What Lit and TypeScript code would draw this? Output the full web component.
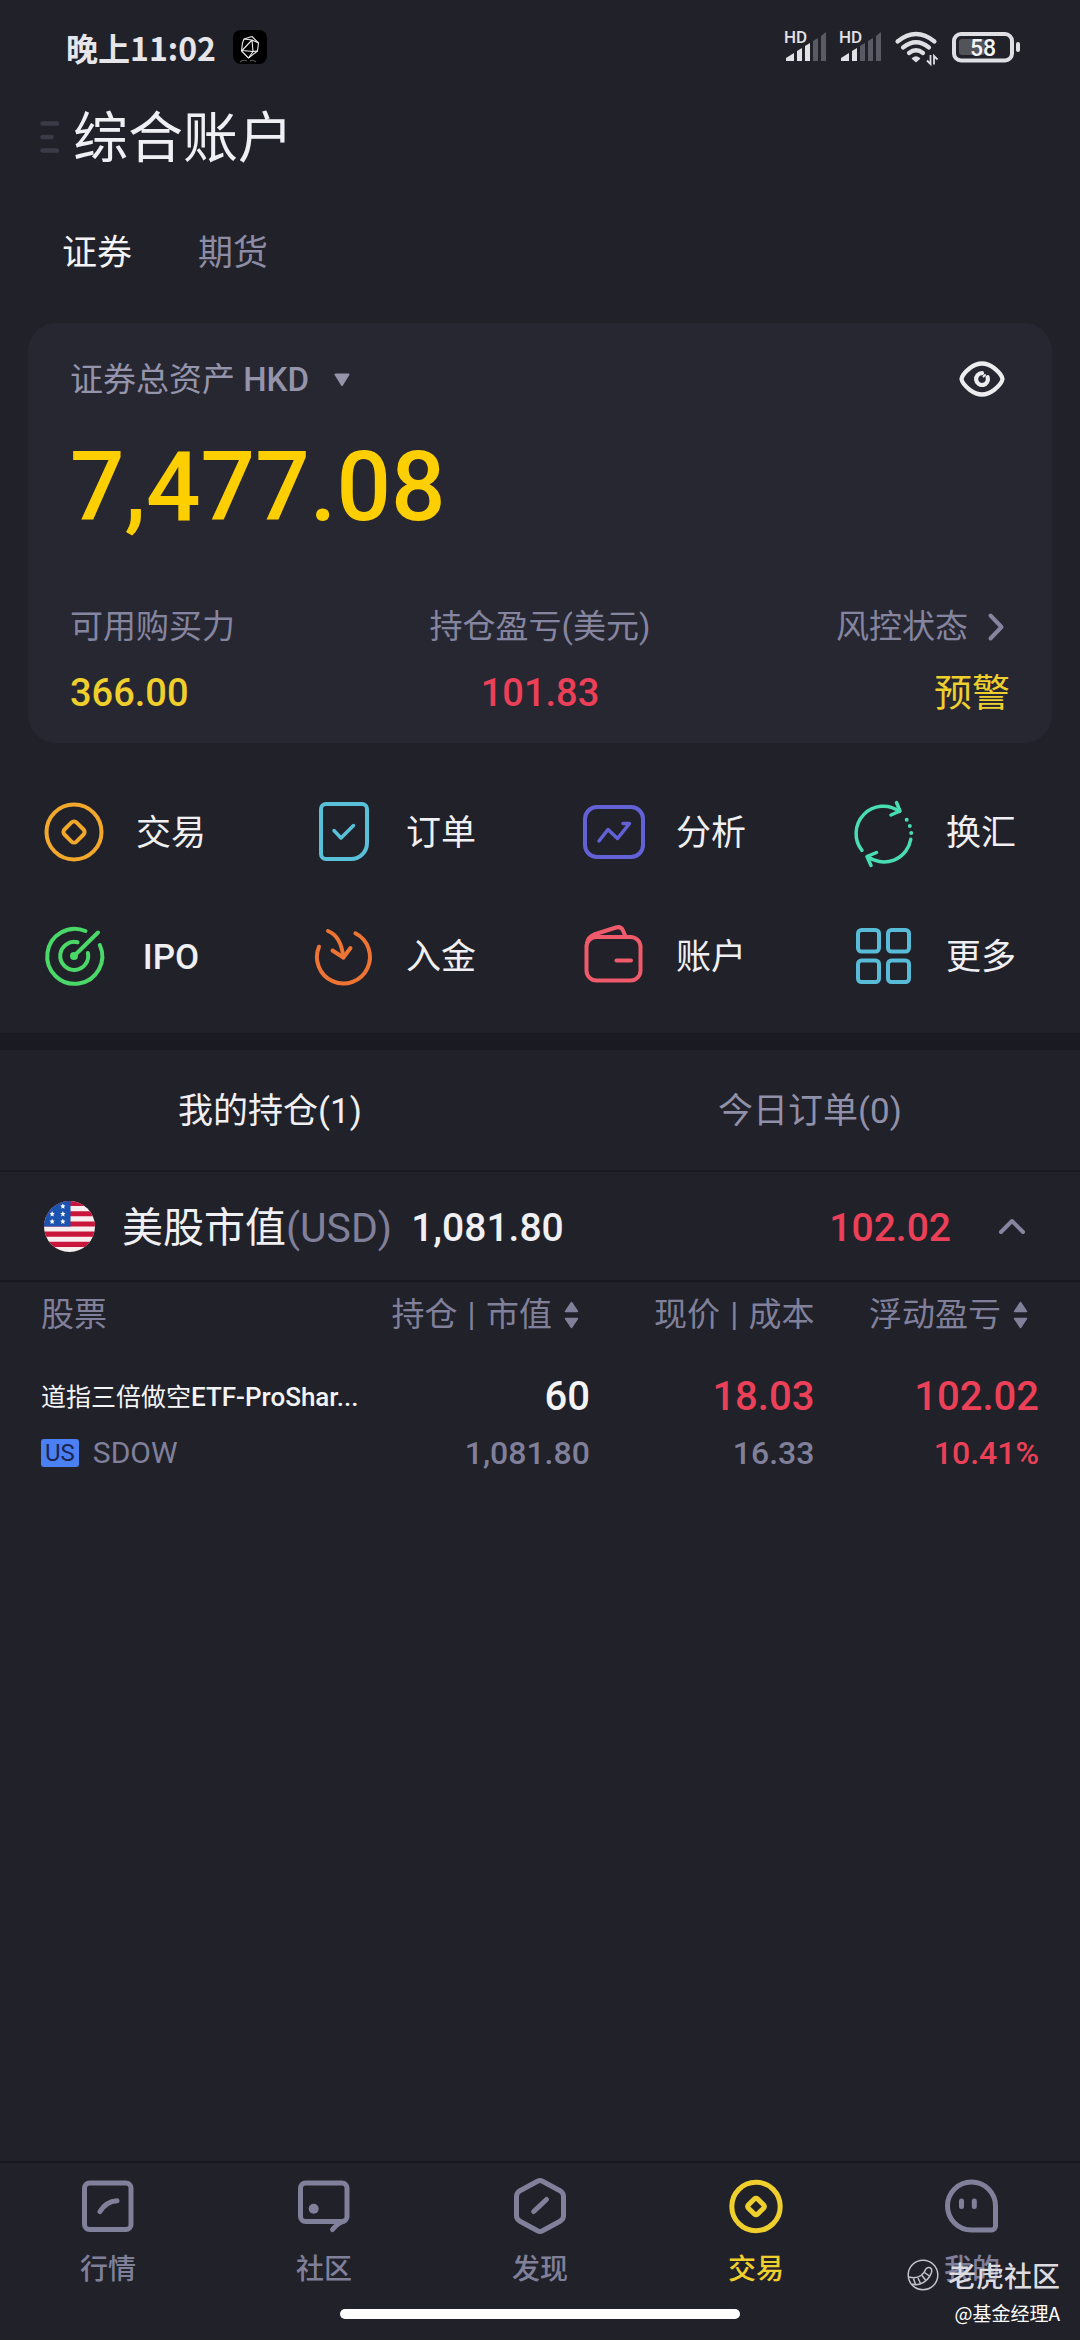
import { LitElement, html, css, svg } from "lit";
import { customElement, property, state } from "lit/decorators.js";
import { classMap } from "lit/directives/class-map.js";

const fontStack = css`Roboto, "Noto Sans CJK SC", sans-serif`;

const reset = css`
  * {
    box-sizing: border-box;
  }
  button {
    appearance: none;
    border: 0;
    margin: 0;
    padding: 0;
    background: none;
    color: inherit;
    font: inherit;
    cursor: pointer;
  }
  a {
    color: inherit;
    text-decoration: none;
  }
  svg {
    display: block;
    flex: none;
    overflow: visible;
  }
`;

const coin = svg`<circle cx="32" cy="32" r="27.5"/><rect x="23.5" y="23.5" width="17" height="17" rx="3.5" transform="rotate(45 32 32)"/>`;

const actions = [
  { label: "交易", color: "#f2a92b", icon: coin },
  {
    label: "订单",
    color: "#58c0d8",
    icon: svg`<path d="M14 4H50a5 5 0 0 1 5 5V43a16 16 0 0 1-16 16H14a5 5 0 0 1-5-5V9a5 5 0 0 1 5-5z"/><path d="M22 30.5L29 38L41.5 25.5" stroke-width="3.5"/>`,
  },
  {
    label: "分析",
    color: "#6262d6",
    icon: svg`<rect x="3" y="7" width="58" height="50" rx="12"/><path d="M17 41L26 29.5L35.5 38.5L47.5 23.5H41" stroke-width="3.5"/>`,
  },
  {
    label: "换汇",
    color: "#48deb2",
    icon: svg`<g stroke-width="3.5"><path d="M10 50.5A27.3 27.3 0 0 1 47.5 11.5"/><path d="M44.5 2.5L48 11L39 15"/><path d="M58.8 39.3A27.3 27.3 0 0 1 15.5 56.5"/><path d="M24.5 52.5L15 56.5L19 65.5"/></g><path d="M54.7 19.7h0M57.8 26h0M59.2 33h0"/>`,
  },
  {
    label: "IPO",
    color: "#4ad868",
    icon: svg`<path d="M43.5 7A27.5 27.5 0 1 0 57.8 21"/><path d="M35.5 18.3A14 14 0 1 0 45.9 29"/><path d="M32 32L56 8.5"/><circle cx="32" cy="32" r="2"/>`,
  },
  {
    label: "入金",
    color: "#ee7433",
    icon: svg`<path d="M43.4 9.3A26.5 26.5 0 1 1 7 22.7"/><path d="M16 7Q29 12 31.4 33.5"/><path d="M20.5 26.5L31.4 33.5L38.5 24"/>`,
  },
  {
    label: "账户",
    color: "#f05b6c",
    icon: svg`<rect x="4.5" y="13" width="54" height="43.5" rx="10"/><path d="M5 19Q6 13 12 10.5L34 3.5Q39 2 41 6.5L43.5 12.5"/><path d="M34.5 36.5H49"/>`,
  },
  {
    label: "更多",
    color: "#58bcd8",
    icon: svg`<g stroke-width="4"><rect x="6" y="6" width="21" height="21.5" rx="3.5"/><rect x="36" y="6" width="21" height="21.5" rx="3.5"/><rect x="6" y="36.5" width="21" height="21.5" rx="3.5"/><rect x="36" y="36.5" width="21" height="21.5" rx="3.5"/></g>`,
  },
];

const navItems = [
  {
    label: "行情",
    icon: svg`<rect x="4.5" y="5" width="46.5" height="46.5" rx="5"/><path d="M20 33.5Q26 23.5 37 22.7"/>`,
  },
  {
    label: "社区",
    icon: svg`<rect x="4.5" y="5" width="46.5" height="38.5" rx="5"/><circle cx="17.7" cy="30.7" r="5" fill="currentColor" stroke="none"/><path d="M36.5 51.5Q42 45 48 43"/>`,
  },
  {
    label: "发现",
    icon: svg`<path d="M25.5 3.2Q28 2 30.5 3.2L48.5 13Q51.5 15 51.5 18.5V37.5Q51.5 41 48.5 43L30.5 52.8Q28 54 25.5 52.8L7.5 43Q4.5 41 4.5 37.5V18.5Q4.5 15 7.5 13z"/><path d="M21.7 33.5L34.5 21.5"/>`,
  },
  {
    label: "交易",
    icon: svg`<circle cx="28" cy="28.5" r="24.2"/><rect x="21.5" y="22" width="13" height="13" rx="2" transform="rotate(45 28 28.5)"/>`,
  },
  {
    label: "我的",
    icon: svg`<path d="M27.5 4A24 24 0 0 1 51.5 28V48a4 4 0 0 1-4 4H27.5A24 24 0 0 1 27.5 4z"/><path d="M17.5 23V28.5M30.3 23V28.5"/>`,
  },
];

@customElement("status-bar")
class StatusBar extends LitElement {
  static styles = [
    reset,
    css`
      :host {
        display: flex;
        align-items: center;
        justify-content: space-between;
        height: 94px;
        padding: 0 59px 0 66px;
        color: #e6e6ea;
      }
      .left,
      .right {
        display: flex;
        align-items: center;
      }
      .left {
        gap: 17px;
      }
      .right {
        gap: 14px;
      }
      .time {
        font: 700 32px/48px "Noto Sans CJK SC", sans-serif;
      }
      .tag {
        font: 500 17px Roboto, sans-serif;
      }
      .level {
        font: 500 23px Roboto, sans-serif;
      }
    `,
  ];

  private signal(active: number) {
    const bars = [
      "M1 30V27L9 22V30z",
      "M12 30V20L17 17V30z",
      "M20 30V15L25 12V30z",
      "M28 30V10L33 7V30z",
      "M36 30V5L41 1V30z",
    ];
    return html`<svg width="41" height="32" viewBox="0 0 41 32">
      ${bars.map((d, i) => svg`<path d=${d} fill=${i < active ? "#e2e2e6" : "#5a5a64"}/>`)}
      <text class="tag" x="-1" y="12" fill="#e2e2e6">HD</text>
    </svg>`;
  }

  render() {
    return html`
      <div class="left">
        <span class="time">晚上11:02</span>
        <svg width="34" height="34" viewBox="0 0 34 34">
          <rect width="34" height="34" rx="8" fill="#000" />
          <g fill="none" stroke="#eee" stroke-width="1.1" stroke-linejoin="round">
            <path d="M11 9L19 6.5L25.5 13L24.5 21L15.5 28L8.5 21L9.5 13z" />
            <path d="M11 9L19 10L25.5 13M19 10L9 20.5L20 21.5L24.5 21M19 10L20 21.5L15.5 28" />
            <path d="M7 32Q10 29 14 31M17 31Q20 29 23 32" stroke="#555" />
          </g>
        </svg>
      </div>
      <div class="right">
        ${this.signal(3)} ${this.signal(2)}
        <svg width="43" height="32" viewBox="0 0 43 32">
          <g fill="none" stroke="#dedee3" stroke-width="4.2" stroke-linecap="round">
            <path d="M2.5 10.5Q21 -4.5 39.5 10.5" />
            <path d="M8 16.5Q21 6 34 16.5" />
            <path d="M14 22Q21 16.5 28 22" />
          </g>
          <path d="M17.5 27.5Q21 24.5 24.5 27.500L21 30.500z" fill="#dedee3" stroke="#dedee3" stroke-width="1.500" stroke-linejoin="round" />
          <path d="M35.5 24V33L32 29.5M39 33.5V25L42.5 28.5" fill="none" stroke="#dedee3" stroke-width="1.8" />
        </svg>
        <svg width="69" height="32" viewBox="0 0 69 32">
          <rect x="2" y="3" width="58" height="26.5" rx="7" fill="none" stroke="#dedee3" stroke-width="4" />
          <rect x="7" y="8" width="26" height="16" rx="3" fill="#53535a" />
          <rect x="64" y="11" width="4" height="10" rx="2" fill="#dedee3" />
          <text class="level" x="31" y="24.5" text-anchor="middle" fill="#f4f4f6">58</text>
        </svg>
      </div>
    `;
  }
}

@customElement("asset-card")
class AssetCard extends LitElement {
  @state() private masked = false;

  static styles = [
    reset,
    css`
      :host {
        display: block;
        margin: 0 28px;
        padding: 31px 42px 28px;
        border-radius: 28px;
        background: #272732;
        color: #8585a0;
        font: 400 33px/44px ${fontStack};
      }
      .top {
        display: flex;
        align-items: center;
        justify-content: space-between;
        height: 50px;
      }
      .currency {
        display: flex;
        align-items: center;
        gap: 25px;
        padding-top: 2px;
        color: #9494ab;
      }
      .code {
        font-weight: 500;
      }
      .eye {
        padding-right: 5px;
      }
      .total {
        margin: 27px 0 62px;
        color: #fdcf00;
        font-size: 96px;
        line-height: 112px;
        font-weight: 500;
      }
      .stats {
        display: grid;
        grid-template-columns: 1fr 1fr 1fr;
        margin: 0;
      }
      .stat {
        display: flex;
        flex-direction: column;
        gap: 22px;
      }
      .stat:nth-child(2) {
        align-items: center;
      }
      .stat:nth-child(3) {
        align-items: flex-end;
      }
      .label {
        display: flex;
        align-items: center;
        gap: 20px;
      }
      .more {
        margin-right: 6px;
      }
      .value {
        margin: 0;
        font-size: 38px;
        font-weight: 500;
      }
      .yellow {
        color: #efcf2c;
      }
      .text {
        font-weight: 400;
      }
      .red {
        color: #ec4058;
      }
    `,
  ];

  render() {
    const mask = (v: string) => (this.masked ? "****" : v);
    return html`
      <div class="top">
        <button class="currency">
          <span>证券总资产 <span class="code">HKD</span></span>
          <svg width="16" height="14" viewBox="0 0 16 14">
            <path d="M1.5 1.5H14.5L8 12z" fill="currentColor" stroke="currentColor" stroke-width="2" stroke-linejoin="round" />
          </svg>
        </button>
        <button class="eye" aria-label="显示或隐藏金额" @click=${() => (this.masked = !this.masked)}>
          <svg width="46" height="38" viewBox="0 0 46 38" fill="none" stroke="#ededf0" stroke-width="4.2" stroke-linecap="round">
            <path d="M2.5 19Q3 14.5 11 8Q23 -1 35 8Q43 14.5 43.5 19Q43 23.5 35 30Q23 39 11 30Q3 23.5 2.5 19z" />
            <path d="M23 13.2A5.9 5.9 0 1 0 28.6 17.2" />
            <path d="M24.5 16.5L26 15" stroke-width="2" />
          </svg>
        </button>
      </div>
      <div class="total">${mask("7,477.08")}</div>
      <dl class="stats">
        <div class="stat">
          <dt class="label">可用购买力</dt>
          <dd class="value yellow">${mask("366.00")}</dd>
        </div>
        <div class="stat">
          <dt class="label">持仓盈亏(美元)</dt>
          <dd class="value red">${mask("101.83")}</dd>
        </div>
        <div class="stat">
          <dt class="label">
            风控状态
            <svg class="more" width="16" height="28" viewBox="0 0 16 28" fill="none" stroke="currentColor" stroke-width="4" stroke-linecap="round" stroke-linejoin="round">
              <path d="M2.5 2.5L13.5 14L2.5 25.5" />
            </svg>
          </dt>
          <dd class="value yellow text">预警</dd>
        </div>
      </dl>
    `;
  }
}

@customElement("quick-actions")
class QuickActions extends LitElement {
  static styles = [
    reset,
    css`
      :host {
        display: grid;
        grid-template-columns: repeat(4, 1fr);
        grid-auto-rows: 124px;
        padding: 27px 0 15px;
        border-bottom: 17px solid #1a1a23;
        color: #f0f0f4;
        font: 400 35px/44px ${fontStack};
      }
      .action {
        display: flex;
        align-items: center;
        gap: 30px;
        padding-left: 42px;
      }
      .name {
        min-width: 70px;
        padding-top: 4px;
        text-align: center;
      }
      .latin {
        font-weight: 500;
      }
    `,
  ];

  render() {
    return actions.map(
      (a) => html`<a class="action" href="#">
        <svg width="64" height="64" viewBox="0 0 64 64" fill="none" stroke=${a.color} stroke-width="4" stroke-linecap="round" stroke-linejoin="round">
          ${a.icon}
        </svg>
        <span class=${classMap({ name: true, latin: a.label === "IPO" })}>${a.label}</span>
      </a>`
    );
  }
}

const sortIcon = html`<svg width="15" height="28" viewBox="0 0 15 28" fill="currentColor" stroke="currentColor" stroke-width="1.5" stroke-linejoin="round">
  <path d="M1.5 10.500L7.500 1.500L13.500 10.500zM1.500 17.500L7.500 26.500L13.500 17.500z" />
</svg>`;

@customElement("holdings-panel")
class HoldingsPanel extends LitElement {
  @state() private tab = 0;

  static styles = [
    reset,
    css`
      :host {
        display: block;
        font: 400 33px/44px ${fontStack};
        color: #80809a;
      }
      .tabs {
        display: grid;
        grid-template-columns: 1fr 1fr;
        height: 122px;
        border-bottom: 2px solid #181821;
      }
      .tab {
        padding-top: 4px;
        font-size: 35px;
        color: #9090a8;
      }
      .tab.on {
        color: #f0f0f4;
      }
      .market {
        display: flex;
        align-items: center;
        width: 100%;
        height: 110px;
        padding: 0 54px 0 44px;
        border-bottom: 2px solid #181821;
        font-size: 41px;
        text-align: left;
      }
      .title,
      .amount,
      .gain {
        padding-top: 4px;
      }
      .title {
        margin: 0 19px 0 27px;
        color: #f0f0f4;
      }
      .unit {
        color: #80809a;
      }
      .amount,
      .gain {
        font-size: 39px;
        font-weight: 500;
      }
      .amount {
        color: #f0f0f4;
      }
      .gain {
        margin: 0 47px 0 auto;
        color: #ec4058;
      }
      .table-wrap {
        padding: 0 41px;
      }
      .table {
        width: 100%;
        border-collapse: collapse;
        table-layout: fixed;
      }
      th,
      td {
        padding: 0;
        text-align: right;
        font-weight: 400;
        white-space: nowrap;
      }
      th {
        height: 62px;
        padding-top: 4px;
      }
      .c-name {
        width: 33%;
      }
      .c-hold {
        width: 22%;
      }
      th:first-child,
      td:first-child {
        text-align: left;
      }
      .sort {
        display: inline-flex;
        align-items: center;
        gap: 12px;
        padding-right: 11px;
        vertical-align: top;
      }
      .bar {
        padding: 0 2px;
      }
      td {
        padding-top: 25px;
      }
      .main,
      .sub {
        display: flex;
        align-items: center;
        justify-content: flex-end;
      }
      td:first-child .main,
      td:first-child .sub {
        justify-content: flex-start;
      }
      .main {
        height: 56px;
        font-size: 40px;
        font-weight: 500;
        color: #f4f4f6;
      }
      .sub {
        height: 44px;
        margin-top: 6px;
        font-size: 32px;
        font-weight: 500;
      }
      .name {
        font-size: 25px;
      }
      .latin {
        font-size: 26px;
        font-weight: 500;
      }
      td:first-child .main,
      td:first-child .sub {
        font-weight: 400;
      }
      .ticker {
        font-size: 30px;
      }
      .badge {
        margin-right: 14px;
        padding: 0 4px;
        border-radius: 3px;
        background: #4a80f4;
        color: #1c2450;
        font-size: 24px;
        line-height: 28px;
      }
      .red {
        color: #ec4058;
      }
    `,
  ];

  render() {
    return html`
      <div class="tabs" role="tablist">
        ${["我的持仓(1)", "今日订单(0)"].map(
          (t, i) => html`<button role="tab" class=${classMap({ tab: true, on: this.tab === i })} aria-selected=${this.tab === i} @click=${() => (this.tab = i)}>${t}</button>`
        )}
      </div>
      <button class="market">
        <svg width="51" height="51" viewBox="0 0 50 50">
          <defs>
            <clipPath id="disc"><circle cx="25" cy="25" r="25" /></clipPath>
          </defs>
          <g clip-path="url(#disc)">
            <rect width="50" height="50" fill="#f7eef0" />
            <path d="M0 2.5H50M0 12.5H50M0 22.5H50M0 32.5H50M0 42.5H50" stroke="#c9143c" stroke-width="5" />
            <rect width="26" height="25" fill="#1c52b0" />
          </g>
          <path id="star" transform="translate(18.5 5)" d="M0 -2.6L.8 -.8L2.6 -.6L1.2 .7L1.6 2.6L0 1.6L-1.6 2.6L-1.2 .7L-2.6 -.6L-.8 -.8z" fill="#fff" />
          ${[[8, 12.5], [18.5, 12.5], [8, 20], [18.5, 20]].map(([x, y]) => svg`<use href="#star" x=${x - 18.5} y=${y - 5}/>`)}
        </svg>
        <span class="title">美股市值<span class="unit">(USD)</span></span>
        <span class="amount">1,081.80</span>
        <span class="gain">102.02</span>
        <svg width="28" height="18" viewBox="0 0 28 18" fill="none" stroke="#8585a0" stroke-width="4" stroke-linecap="round" stroke-linejoin="round">
          <path d="M3 15L14 4L25 15" />
        </svg>
      </button>
      <div class="table-wrap">
        <table class="table">
          <thead>
            <tr>
              <th class="c-name" scope="col">股票</th>
              <th class="c-hold" scope="col"><button class="sort"><span>持仓<span class="bar"> | </span>市值</span>${sortIcon}</button></th>
              <th scope="col">现价<span class="bar"> | </span>成本</th>
              <th scope="col"><button class="sort">浮动盈亏${sortIcon}</button></th>
            </tr>
          </thead>
          <tbody>
            <tr>
              <td>
                <div class="main name"><span>道指三倍做空<span class="latin">ETF-ProShar...</span></span></div>
                <div class="sub ticker"><span class="badge">US</span>SDOW</div>
              </td>
              <td>
                <div class="main">60</div>
                <div class="sub">1,081.80</div>
              </td>
              <td>
                <div class="main red">18.03</div>
                <div class="sub">16.33</div>
              </td>
              <td>
                <div class="main red">102.02</div>
                <div class="sub red">10.41%</div>
              </td>
            </tr>
          </tbody>
        </table>
      </div>
    `;
  }
}

@customElement("bottom-nav")
class BottomNav extends LitElement {
  @property({ type: Number }) active = 3;

  static styles = [
    reset,
    css`
      :host {
        display: block;
        border-top: 2px solid #181821;
        padding-bottom: 21px;
        font: 500 28px/36px ${fontStack};
        color: #80809a;
      }
      .items {
        display: grid;
        grid-template-columns: repeat(5, 1fr);
        padding: 15px 0 21px;
      }
      .item {
        display: flex;
        flex-direction: column;
        align-items: center;
        gap: 18px;
      }
      .item.on {
        color: #efcf2c;
      }
      .indicator {
        width: 37%;
        height: 10px;
        margin: 0 auto;
        border-radius: 5px;
        background: #fff;
      }
    `,
  ];

  render() {
    return html`
      <nav class="items">
        ${navItems.map(
          (n, i) => html`<a href="#" class=${classMap({ item: true, on: i === this.active })}>
            <svg width="56" height="56" viewBox="0 0 56 56" fill="none" stroke="currentColor" stroke-width="5" stroke-linecap="round" stroke-linejoin="round">${n.icon}</svg>
            ${n.label}
          </a>`
        )}
      </nav>
      <div class="indicator"></div>
    `;
  }
}

@customElement("app-root")
class AppRoot extends LitElement {
  @state() private tab = 0;

  static styles = [
    reset,
    css`
      :host {
        position: relative;
        display: flex;
        flex-direction: column;
        min-height: 100vh;
        background: #21212a;
        color: #f0f0f4;
        font: 400 35px/48px ${fontStack};
      }
      .header {
        display: flex;
        align-items: center;
        gap: 13px;
        height: 86px;
        padding-left: 40px;
      }
      .title {
        margin: 0;
        padding-top: 2px;
        font-size: 55px;
        line-height: 80px;
        font-weight: 400;
      }
      .tabs {
        display: flex;
        align-items: center;
        gap: 66px;
        height: 143px;
        padding: 4px 0 0 62px;
      }
      .tab {
        color: #8c8ca4;
      }
      .tab.on {
        color: #f4f4f6;
      }
      .content {
        flex: 1;
      }
      .credit {
        position: absolute;
        right: 20px;
        bottom: 14px;
        display: flex;
        flex-direction: column;
        align-items: flex-end;
        gap: 7px;
        font: 400 19px/26px "Noto Sans CJK SC", sans-serif;
        color: #fff;
        pointer-events: none;
      }
      .brand {
        display: flex;
        align-items: center;
        gap: 9px;
        font-size: 28px;
        line-height: 36px;
        font-weight: 500;
        color: #dcdce0;
      }
    `,
  ];

  render() {
    return html`
      <status-bar></status-bar>
      <header class="header">
        <button aria-label="菜单">
          <svg width="20" height="32" viewBox="0 0 20 32" stroke="#3b3b47" stroke-width="4.5" stroke-linecap="round">
            <path d="M2.5 2.5H17M2.5 16H11.5M2.5 29.5H17" />
          </svg>
        </button>
        <h1 class="title">综合账户</h1>
      </header>
      <div class="tabs" role="tablist">
        ${["证券", "期货"].map(
          (t, i) => html`<button role="tab" class=${classMap({ tab: true, on: this.tab === i })} aria-selected=${this.tab === i} @click=${() => (this.tab = i)}>${t}</button>`
        )}
      </div>
      <main class="content">
        <asset-card></asset-card>
        <quick-actions></quick-actions>
        <holdings-panel></holdings-panel>
      </main>
      <bottom-nav></bottom-nav>
      <div class="credit">
        <div class="brand">
          <svg width="32" height="32" viewBox="0 0 32 32" fill="none" stroke="#c4c4ca" stroke-width="1.5">
            <circle cx="16" cy="16" r="14.8" />
            <path d="M2 18Q9 20 14 16.5Q17.5 14 18.5 10.5Q19.5 8 22.5 8.5Q25.5 9.5 24.5 13.5Q21.5 22 13 25Q8.5 26.5 5 25" />
            <path d="M6.5 19.5L8.5 25.500M11 19L13.5 24.500M15 16.500L18.500 21M17.500 13.500L22.500 17" />
          </svg>
          <span>老虎社区</span>
        </div>
        <span>@基金经理A</span>
      </div>
    `;
  }
}
